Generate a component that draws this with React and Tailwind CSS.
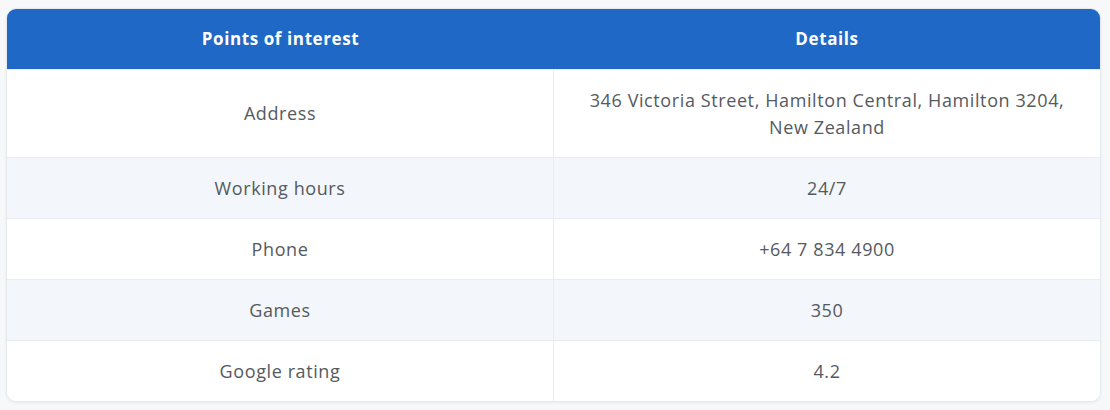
const rows = [
  ["Address", "346 Victoria Street, Hamilton Central, Hamilton 3204, New Zealand"],
  ["Working hours", "24/7"],
  ["Phone", "+64 7 834 4900"],
  ["Games", "350"],
  ["Google rating", "4.2"],
];

export default function App() {
  return (
    <div className="w-[1110px] h-[410px] bg-[#f7f8fa] px-[6px] pt-[8px] font-['Open_Sans',sans-serif]">
      <div className="w-[1095px] rounded-[10px] overflow-hidden border border-[#e6e9ee] bg-white shadow-[0_1px_3px_rgba(0,0,0,0.06)]">
        <div className="grid grid-cols-[547px_1fr] h-[60px] bg-[#1f68c5] text-white text-[17px] font-bold tracking-[0.6px]">
          <div className="flex items-center justify-center">Points of interest</div>
          <div className="flex items-center justify-center">Details</div>
        </div>
        {rows.map(([k, v], i) => (
          <div
            key={k}
            className={`grid grid-cols-[547px_1fr] text-[18px] tracking-[0.6px] text-[#555a60] border-t border-[#e8ebef] ${
              i % 2 === 1 ? "bg-[#f3f6fa]" : "bg-white"
            } ${i === 0 ? "h-[88px]" : "h-[61px]"}`}
          >
            <div className="flex items-center justify-center border-r border-[#e8ebef]">{k}</div>
            <div className="flex items-center justify-center text-center leading-[27px] px-[24px]">{v}</div>
          </div>
        ))}
      </div>
    </div>
  );
}
